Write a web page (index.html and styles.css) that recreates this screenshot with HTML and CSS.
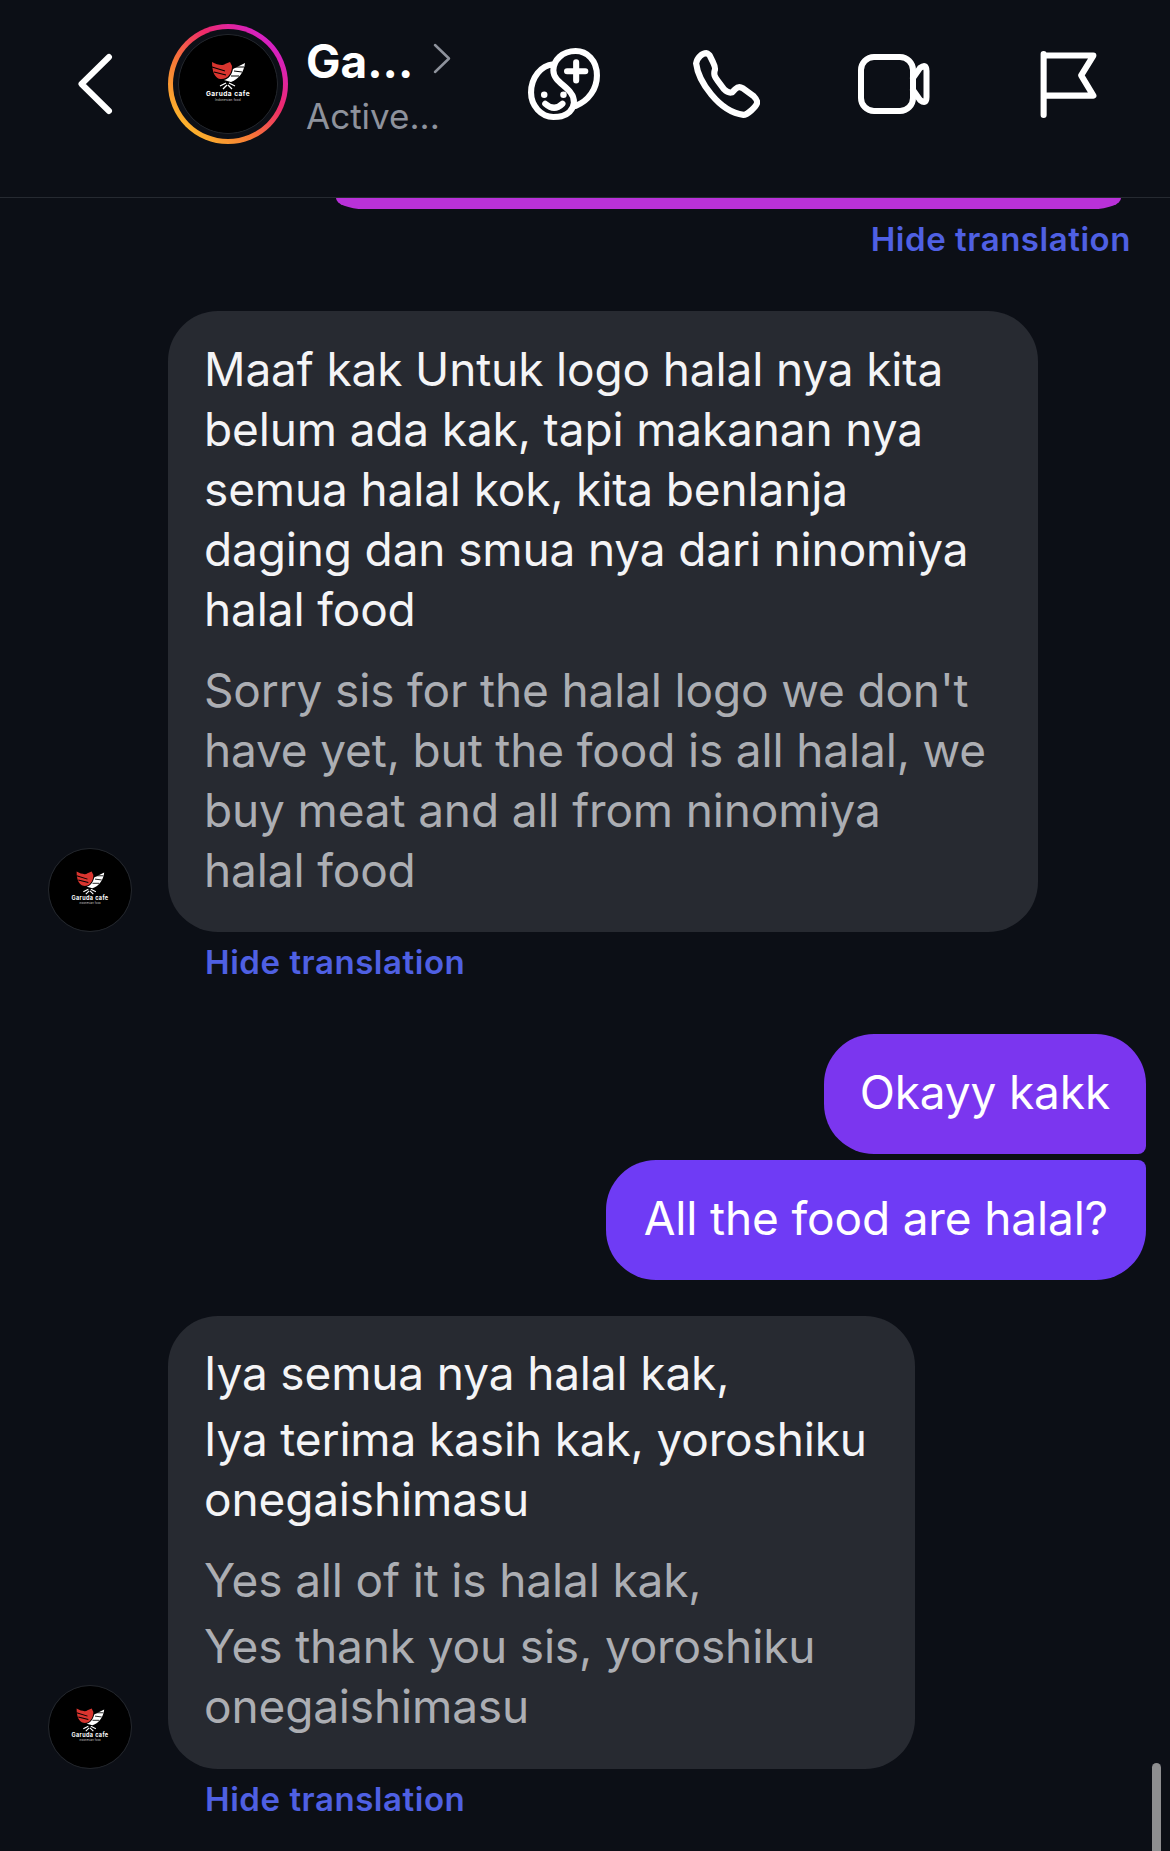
FILE: index.html
```html
<!DOCTYPE html>
<html lang="en">
	<head>
		<meta charset="UTF-8" />
		<title>Garuda cafe</title>
		<link rel="stylesheet" href="styles.css">
	</head>
	<body>
		<div class="screen">
			<header class="top-bar">
				<svg class="line-icon back-icon" viewBox="0 0 36 62">
					<path d="M31 4 L3.5 31 L31 58" />
				</svg>
				<div class="story-ring">
					<div class="ring-gap">
						<svg class="logo-big" viewBox="0 0 98 98">
							<g id="garudaLogo">
								<circle cx="49" cy="49" r="49" fill="#000" />
								<path d="M33 27 C38 30 44 31 46 29 L51 27 L53 31 C53 39 48 45 41 44 C36 43 33 37 33 27Z" fill="#d9352f" />
								<path d="M33 32 L46 36 M35 37 L47 40" stroke="#000" stroke-width="1.2" fill="none" />
								<path d="M66 28 C65 37 60 44 52 47 L45 45 C50 44 53 39 54 34 Z" fill="#fff" />
								<path d="M56 32 L65 32 M55 36 L63 37 M52 41 L60 41" stroke="#000" stroke-width="1" fill="none" />
								<path d="M47 48 L41 51 M50 48 L56 51 M48 50 L44 54 M49 50 L53 54" stroke="#fff" stroke-width="1.3" fill="none" />
								<text class="logo-name" x="49" y="61" text-anchor="middle">Garuda cafe</text>
								<text class="logo-sub" x="49" y="65.5" text-anchor="middle">Indonesian food</text>
							</g>
						</svg>
					</div>
				</div>
				<div class="contact">
					<div class="contact-name">
						<span>Ga...</span>
						<svg class="line-icon name-arrow" viewBox="0 0 18 31">
							<path d="M2 2 L16 15.5 L2 29" />
						</svg>
					</div>
					<div class="contact-status">Active...</div>
				</div>
				<div class="actions">
					<svg class="line-icon icon-effects" viewBox="0 0 72 72">
						<path d="M47 57 C60 52 68 40 68 27 C68 12 58 3 47 3 C34 3 25 12 25 22 C25 32 36 36 42 44 C47 50 46 58 41 63 C36 68 30 68 25 68 C13 68 3 57 3 44 C3 29 13 17 25 16" />
						<path d="M47.5 14 L47.5 32 M38.5 23 L56.5 23" />
						<path d="M17 55 Q26 63 34 55" />
						<circle class="dot" cx="16" cy="46" r="3.2" />
						<circle class="dot" cx="35" cy="46" r="3.2" />
					</svg>
					<svg class="line-icon icon-phone" viewBox="0 0 66 66">
						<path d="M14 3 C10 3 5 7 4 13 C6 30 26 60 50 63 C54 63 62 55 63 52 C64 49 62 47 60 45 L49 37 C46 35 44 36 42 38 L39 41 C36 42 34 41 31 38 L25 30 C22 26 21 24 22 20 C23 18 22 15 20 11 L17 5 C16 4 15 3 14 3 Z" />
					</svg>
					<svg class="line-icon icon-video" viewBox="0 0 72 60">
						<rect x="3" y="3" width="52" height="54" rx="13" />
						<path d="M55 24 L62 14 Q68.5 9 68.5 17 L68.5 43 Q68.5 51 62 46 L55 36" />
					</svg>
					<svg class="line-icon icon-flag" viewBox="0 0 55 66">
						<path d="M3 3 L3 63 M3 4.5 L52 4.5 L40 24 L52 44 L3 44" />
					</svg>
				</div>
			</header>

			<main class="thread">
				<div class="sent-cut"></div>
				<a class="hide-link hide-right">Hide translation</a>

				<div class="row row-first">
					<svg class="avatar" viewBox="0 0 98 98"><use href="#garudaLogo" /></svg>
					<div class="bubble">
						<div class="original">Maaf kak Untuk logo halal nya kita belum ada kak, tapi makanan nya semua halal kok, kita benlanja daging dan smua nya dari ninomiya halal food</div>
						<div class="translated">Sorry sis for the halal logo we don't have yet, but the food is all halal, we buy meat and all from ninomiya halal food</div>
					</div>
				</div>
				<a class="hide-link hide-left">Hide translation</a>

				<div class="sent-group">
					<div class="sent sent-top">Okayy kakk</div>
					<div class="sent sent-bottom">All the food are halal?</div>
				</div>

				<div class="row row-second">
					<svg class="avatar" viewBox="0 0 98 98"><use href="#garudaLogo" /></svg>
					<div class="bubble bubble-short">
						<div class="original">
							<div class="para">Iya semua nya halal kak,</div>
							<div class="para">Iya terima kasih kak, yoroshiku onegaishimasu</div>
						</div>
						<div class="translated">
							<div class="para">Yes all of it is halal kak,</div>
							<div class="para">Yes thank you sis, yoroshiku onegaishimasu</div>
						</div>
					</div>
				</div>
				<a class="hide-link hide-left">Hide translation</a>
			</main>

			<div class="scroll-thumb"></div>
		</div>
	</body>
</html>
```

FILE: styles.css
```css
:root {
	--background: #0c0f16;
	--bubble: #272a31;
	--link: #4f60e3;
	--muted: #8e929c;
}

* {
	box-sizing: border-box;
}

body {
	margin: 0;
	padding: 0;
	font-family: 'Inter', 'Liberation Sans', sans-serif;
	background: var(--background);
	color: white;
}

.screen {
	position: relative;
	width: 1170px;
	height: 1851px;
	overflow: hidden;
}

/* header */
.top-bar {
	display: flex;
	align-items: flex-start;
	height: 198px;
	border-bottom: 1px solid #262a31;
	padding: 24px 0 0 78px;
}

.line-icon {
	flex: none;
	fill: none;
	stroke: white;
	stroke-width: 6px;
	stroke-linecap: round;
	stroke-linejoin: round;
}

.line-icon .dot {
	fill: white;
	stroke: none;
}

.back-icon {
	width: 36px;
	height: 62px;
	margin-top: 29px;
}

.story-ring {
	width: 120px;
	height: 120px;
	margin-left: 54px;
	padding: 5px;
	border-radius: 50%;
	background: linear-gradient(45deg, #fdb92b 12%, #f77737 38%, #ee2a6b 62%, #d21fd0 88%);
}

.ring-gap {
	width: 110px;
	height: 110px;
	padding: 5px;
	border-radius: 50%;
	background: var(--background);
}

.logo-big {
	display: block;
	width: 100px;
	height: 100px;
	border-radius: 50%;
	border: 1px solid #24272c;
}

.logo-name {
	font-size: 6.6px;
	font-weight: 700;
	letter-spacing: 0.45px;
	fill: white;
}

.logo-sub {
	font-size: 3px;
	letter-spacing: 0.2px;
	fill: #cfcfcf;
}

.contact {
	width: 218px;
	padding: 11px 0 0 18px;
}

.contact-name {
	display: flex;
	align-items: center;
	gap: 20px;
	height: 52px;
	font-size: 46px;
	font-weight: 700;
}

.name-arrow {
	width: 18px;
	height: 31px;
	margin-top: -5px;
	stroke: var(--muted);
	stroke-width: 2.5px;
}

.contact-status {
	margin-top: 7px;
	font-size: 35px;
	line-height: 44px;
	color: var(--muted);
}

.actions {
	display: flex;
	align-items: flex-start;
	margin-left: 22px;
}

.icon-effects {
	width: 73px;
	height: 73px;
	margin-top: 24px;
}

.icon-phone {
	width: 68px;
	height: 68px;
	margin: 26px 0 0 91px;
}

.icon-video {
	width: 72px;
	height: 60px;
	margin: 30px 0 0 98px;
}

.icon-flag {
	width: 57px;
	height: 67px;
	margin: 27px 0 0 110px;
}

/* messages */
.thread {
	display: flex;
	flex-direction: column;
}

.sent-cut {
	align-self: flex-end;
	width: 785px;
	height: 11px;
	margin-right: 49px;
	background: #b931d8;
	border-radius: 0 0 28px 28px / 0 0 11px 11px;
}

.hide-link {
	display: block;
	font-size: 33px;
	font-weight: 600;
	letter-spacing: 0.55px;
	line-height: 40px;
	color: var(--link);
}

.hide-right {
	align-self: flex-end;
	margin: 10px 39px 0 0;
}

.hide-left {
	margin: 10px 0 0 205px;
}

.row {
	display: flex;
	align-items: flex-end;
	gap: 36px;
	padding-left: 48px;
}

.row-first {
	margin-top: 52px;
}

.row-second {
	margin-top: 36px;
}

.avatar {
	display: block;
	flex: none;
	width: 84px;
	height: 84px;
	border-radius: 50%;
	border: 1px solid #24272c;
}

.bubble {
	width: 870px;
	padding: 28px 47px 32px 36px;
	border-radius: 50px;
	background: var(--bubble);
	font-size: 46px;
	letter-spacing: -0.15px;
	line-height: 60px;
}

.bubble-short {
	width: 747px;
	padding-top: 27px;
	padding-bottom: 33px;
}

.para + .para {
	margin-top: 6px;
}

.original {
	color: #f4f4f6;
}

.translated {
	margin-top: 21px;
	color: #acaeb3;
}

.sent-group {
	display: flex;
	flex-direction: column;
	align-items: flex-end;
	gap: 6px;
	margin: 52px 24px 0 0;
}

.sent {
	height: 120px;
	border-radius: 50px;
	font-size: 46px;
	letter-spacing: -0.15px;
	line-height: 116px;
}

.sent-top {
	padding: 0 36px;
	background: #7b36ef;
	border-bottom-right-radius: 8px;
}

.sent-bottom {
	padding: 0 38px;
	background: #6f3bf5;
	border-top-right-radius: 8px;
}

.scroll-thumb {
	position: absolute;
	top: 1763px;
	right: 9px;
	width: 9px;
	height: 100px;
	border-radius: 5px;
	background: #8e8e90;
}
```
